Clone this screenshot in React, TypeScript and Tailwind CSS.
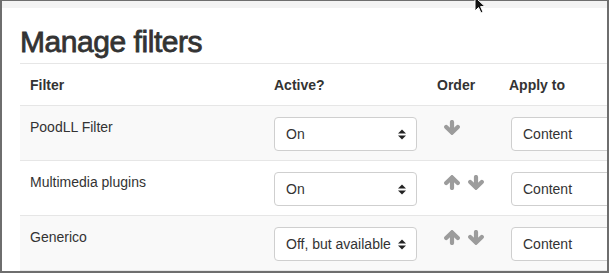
import React from "react";

interface FilterRow {
  name: string;
  active: string;
  up: boolean;
  down: boolean;
  applyTo: string;
}

const rows: FilterRow[] = [
  { name: "PoodLL Filter", active: "On", up: false, down: true, applyTo: "Content" },
  { name: "Multimedia plugins", active: "On", up: true, down: true, applyTo: "Content" },
  { name: "Generico", active: "Off, but available", up: true, down: true, applyTo: "Content" },
];

const Arrow: React.FC<{ dir: "up" | "down" }> = ({ dir }) => (
  <svg
    width="16"
    height="15"
    viewBox="0 0 16 15"
    className={dir === "up" ? "rotate-180" : ""}
  >
    <g stroke="#9c9c9c" strokeWidth="4.2" fill="none" strokeLinecap="round" strokeLinejoin="miter">
      <line x1="8" y1="2" x2="8" y2="12" />
      <polyline points="2.2,7 8,12.6 13.8,7" />
    </g>
  </svg>
);

const Caret: React.FC = () => (
  <svg width="8" height="11" viewBox="0 0 8 11" className="shrink-0">
    <polygon points="0,4.5 4,0.5 8,4.5" fill="#222" />
    <polygon points="0,6.5 4,10.5 8,6.5" fill="#222" />
  </svg>
);

const SelectBox: React.FC<{ value: string; caret?: boolean; className?: string }> = ({
  value,
  caret = true,
  className = "",
}) => (
  <div
    className={`h-[34px] flex items-center justify-between pl-[11px] pr-[10px] bg-white border border-[#cfcfcf] rounded-[4px] text-[14px] text-[#333] ${className}`}
  >
    <span className="whitespace-nowrap">{value}</span>
    {caret && <Caret />}
  </div>
);

const cols = "grid grid-cols-[244px_163px_72px_230px]";

const App: React.FC = () => {
  return (
    <div className="relative w-[610px] h-[274px] bg-white overflow-hidden font-['Liberation_Sans',Arial,sans-serif]">
      <div className="w-[609px] h-[273px] border-t border-l-2 border-r-2 border-b-2 border-[#6e6e6e] overflow-hidden flex flex-col">
        <div className="h-[7px] bg-[#f3f3f3] shrink-0"></div>

        <div className="pl-[18px] bg-white flex-1 overflow-hidden">
          <h1 className="mt-[17px] text-[30px] leading-[33px] tracking-[-0.45px] text-[#333] [-webkit-text-stroke:0.8px_#333]">
            Manage filters
          </h1>

          <div className="mt-[5px] w-[700px] border-t border-[#e6e6e6]">
            <div className={`${cols} text-[14px] leading-[20px] font-bold text-[#333]`}>
              <div className="px-[10px] pt-[11px] pb-[10px]">Filter</div>
              <div className="px-[10px] pt-[11px] pb-[10px]">Active?</div>
              <div className="px-[10px] pt-[11px] pb-[10px]">Order</div>
              <div className="px-[10px] pt-[11px] pb-[10px]">Apply to</div>
            </div>

            {rows.map((row, index) => (
              <div
                key={index}
                className={`${cols} border-t border-[#e6e6e6] text-[14px] leading-[20px] text-[#333] ${
                  index % 2 === 0 ? "bg-[#f9f9f9]" : "bg-white"
                } ${index === rows.length - 1 ? "border-b" : ""}`}
              >
                <div className="px-[10px] pt-[11px] pb-[9px]">{row.name}</div>
                <div className="px-[10px] pt-[11px] pb-[9px]">
                  <SelectBox value={row.active} className="w-[143px]" />
                </div>
                <div className="px-[10px] pt-[14px]">
                  <div className="ml-[7px] flex gap-[8px]">
                    {row.up && <Arrow dir="up" />}
                    {row.down && <Arrow dir="down" />}
                  </div>
                </div>
                <div className="pl-[12px] pt-[11px] pb-[9px]">
                  <SelectBox value={row.applyTo} caret={false} className="w-[200px]" />
                </div>
              </div>
            ))}
          </div>
        </div>
      </div>

      {/* mouse pointer over the page */}
      <svg className="absolute left-[474px] top-[-4px]" width="12" height="19" viewBox="0 0 12 19">
        <path d="M1 1 L1 15 L4.5 11.5 L7 17 L9 16 L6.6 10.6 L11 10.6 Z" fill="#111" stroke="#fff" strokeWidth="1" />
      </svg>
    </div>
  );
};

export default App;
